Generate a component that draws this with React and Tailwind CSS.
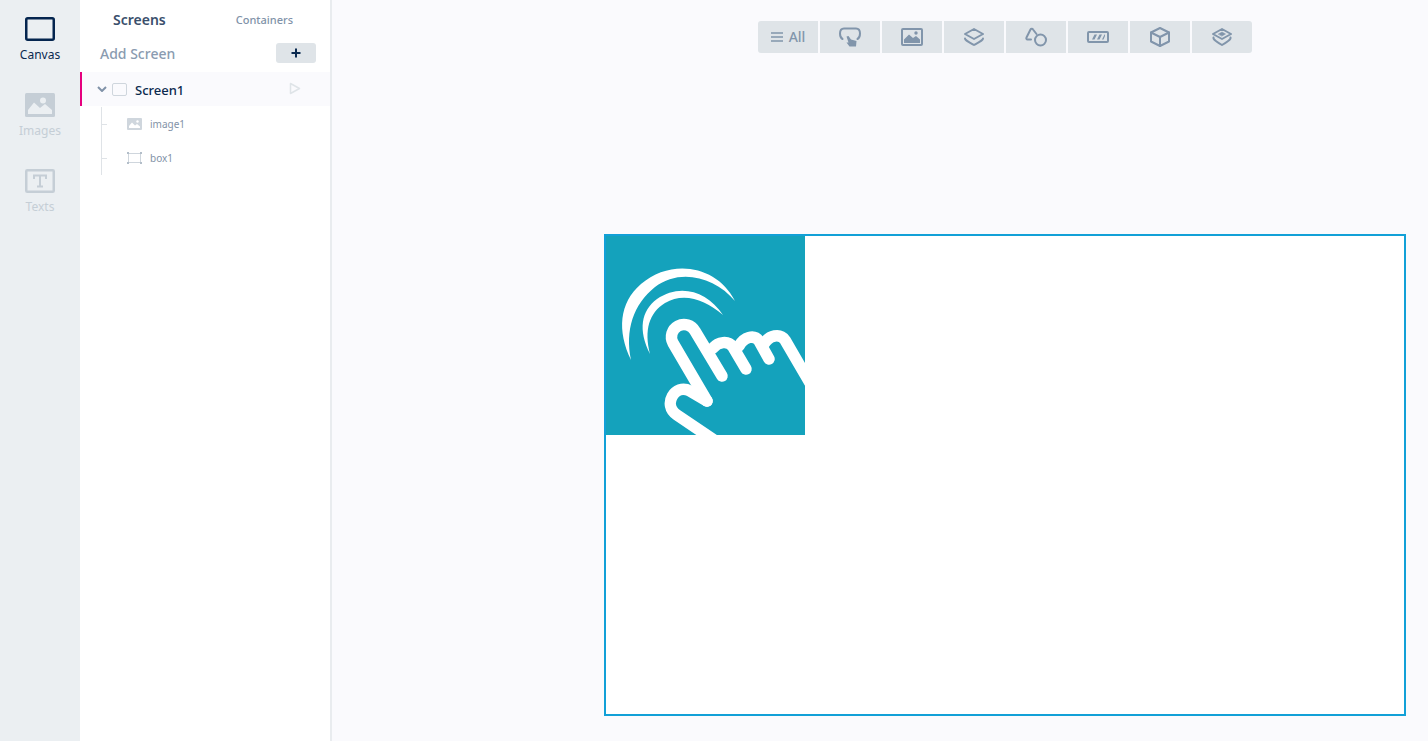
import React from 'react';

const font = { fontFamily: '"Noto Sans", sans-serif' };

const HandLogo = () => (
  <svg viewBox="0 0 200 200" className="w-[200px] h-[200px] block">
    <path
      fill="#fff"
      d="M26 125C12 96 14 68 36 49C66 23 112 30 130 66C110 42 75 33 50 52C28 70 20 95 26 125Z"
    />
    <path
      fill="#fff"
      d="M45 119C33 95 36 76 52 64C75 48 102 56 118 80C100 64 78 57 60 68C44 78 39 95 45 119Z"
    />
    <g fill="none" stroke="#fff" strokeWidth="11.5" strokeLinecap="round" strokeLinejoin="round">
      <path d="M102 166L68 108A12.5 12.5 0 0 1 90 96L117 141" />
      <path d="M108 113C113 107 123 105 128 112L141 134" />
      <path d="M134 111C139 102 149 99 154 106L164 124" />
      <path d="M159 109C164 100 175 98 180 105L212 160" />
      <path d="M102 166L85 156C70 148 57 170 72 180L112 207" />
    </g>
  </svg>
);

const RailItem = ({ label, active, children }) => (
  <div className={`flex flex-col items-center h-[76px] pt-[17px] ${active ? 'text-[#0b2a50]' : 'text-[#c5ced6]'}`}>
    {children}
    <span className="text-xs leading-4 mt-[6px]">{label}</span>
  </div>
);

const ToolButton = ({ className = '', children }) => (
  <div className={`w-[60px] h-8 bg-[#dfe4e8] flex items-center justify-center text-[#8195ab] ${className}`}>
    {children}
  </div>
);

const TreeRow = ({ label, children }) => (
  <div className="flex items-center h-[34px]">
    <div className="w-[5px] h-px bg-[#dfe3e7]" />
    <div className="ml-[20px] flex items-center">{children}</div>
    <span className="ml-2 text-[10px] text-[#8292a7]">{label}</span>
  </div>
);

const iconProps = { fill: 'none', stroke: 'currentColor', strokeWidth: 2, strokeLinecap: 'round', strokeLinejoin: 'round' };

const App = () => {
  return (
    <div className="flex h-[741px] w-[1428px] overflow-hidden bg-[#fafafd]" style={font}>
      {/* Left rail */}
      <div className="w-20 h-full bg-[#ebeff2] shrink-0">
        <RailItem label="Canvas" active>
          <svg width="30" height="24" viewBox="0 0 30 24">
            <rect x="1.25" y="1.25" width="27.5" height="21.5" rx="1.5" fill="none" stroke="#04254f" strokeWidth="2.5" />
          </svg>
        </RailItem>
        <RailItem label="Images">
          <svg width="30" height="24" viewBox="0 0 30 24">
            <rect width="30" height="24" rx="1.5" fill="#c5ced6" />
            <path d="M3 21V17L9 9.5L15 15L20 11L27 17V21Z" fill="#ebeff2" />
            <circle cx="18" cy="7.5" r="3" fill="#ebeff2" />
          </svg>
        </RailItem>
        <RailItem label="Texts">
          <svg width="30" height="24" viewBox="0 0 30 24">
            <rect x="1.25" y="1.25" width="27.5" height="21.5" rx="1" fill="none" stroke="#c5ced6" strokeWidth="2.5" />
            <path d="M9 10V6.5H21V10M15 6.5V17.5M12 17.5H18" fill="none" stroke="#c5ced6" strokeWidth="2" />
          </svg>
        </RailItem>
      </div>

      {/* Screens panel */}
      <div className="w-[252px] h-full bg-white border-r-2 border-[#e9ecef] shrink-0">
        <div className="flex items-center h-10">
          <span className="ml-[33px] text-sm font-semibold text-[#3a4f6c]">Screens</span>
          <span className="ml-[70px] text-[11px] font-medium text-[#8092a8]">Containers</span>
        </div>
        <div className="flex items-center justify-between h-7 pl-5 pr-[14px]">
          <span className="text-sm font-medium text-[#8a9bb0]">Add Screen</span>
          <div className="w-10 h-5 -mt-[2px] rounded-[3px] bg-[#dfe4e8] flex items-center justify-center">
            <svg width="10" height="10" viewBox="0 0 10 10">
              <path d="M5 .5V9.5M.5 5H9.5" stroke="#0b2a50" strokeWidth="2" />
            </svg>
          </div>
        </div>
        <div className="mt-1 h-[34px] flex items-center bg-[#fafafd] border-l-2 border-[#e6007e]">
          <svg width="10" height="6" viewBox="0 0 10 6" className="ml-[15px]">
            <path d="M1 1L5 5L9 1" fill="none" stroke="#8092a8" strokeWidth="2" />
          </svg>
          <div className="ml-[5px] w-[15px] h-[13px] rounded-[2px] border border-[#cfd6dd] bg-[#fafafd]" />
          <span className="ml-2 mt-[3px] text-[13px] font-medium text-[#0c2a4f]">Screen1</span>
          <svg width="12" height="13" viewBox="0 0 12 13" className="ml-[105px] -mt-[2px]">
            <path d="M1.5 1.5L10.5 6.5L1.5 11.5Z" fill="none" stroke="#dfe4e8" strokeWidth="1.5" strokeLinejoin="round" />
          </svg>
        </div>
        <div className="ml-[21px] border-l border-[#dfe3e7] h-[68px] mt-px">
          <TreeRow label="image1">
            <svg width="15" height="12" viewBox="0 0 15 12">
              <rect width="15" height="12" rx="1" fill="#cfd6dd" />
              <path d="M2 10V8L5 4.5L8 7.5L10 6L13 8.5V10Z" fill="#fff" />
              <circle cx="10.5" cy="3.5" r="1.2" fill="#fff" />
            </svg>
          </TreeRow>
          <TreeRow label="box1">
            <svg width="15" height="12" viewBox="0 0 15 12">
              <rect x="1.5" y="1.5" width="12" height="9" fill="none" stroke="#cfd6dd" />
              <g fill="#b3bec9">
                <rect width="2" height="2" />
                <rect x="13" width="2" height="2" />
                <rect y="10" width="2" height="2" />
                <rect x="13" y="10" width="2" height="2" />
              </g>
            </svg>
          </TreeRow>
        </div>
      </div>

      {/* Workspace */}
      <div className="ml-[272px] w-[802px] flex flex-col items-center">
        <div className="mt-[21px] flex gap-[2px]">
          <ToolButton className="rounded-l-[3px]">
            <svg width="12" height="10" viewBox="0 0 12 10">
              <path d="M0 1H12M0 5H12M0 9H12" stroke="currentColor" strokeWidth="1.6" />
            </svg>
            <span className="ml-[6px] text-sm font-medium leading-none">All</span>
          </ToolButton>
          <ToolButton>
            <svg width="24" height="20" viewBox="0 0 24 20">
              <path d="M4.5 12C2.5 11 2 9.5 2 6.5C2 3 3 1.5 6 1.5H18C21 1.5 22 3 22 6.5C22 9.5 21.5 11 19.5 12" fill="none" stroke="currentColor" strokeWidth="2" strokeLinecap="round" />
              <path d="M8.5 9.5L10.5 9L13 12.5L18.5 14L18 19.5H11.5L8.5 15.5L10.5 15.5Z" fill="currentColor" />
            </svg>
          </ToolButton>
          <ToolButton>
            <svg width="22" height="18" viewBox="0 0 22 18">
              <rect x="1" y="1" width="20" height="16" rx="1" fill="none" stroke="currentColor" strokeWidth="2" />
              <path d="M3 15V11.5L8 6.5L12 10L15 8L19 11.5V15Z" fill="currentColor" />
              <circle cx="15" cy="5" r="1.7" fill="currentColor" />
            </svg>
          </ToolButton>
          <ToolButton>
            <svg width="20" height="18" viewBox="0 0 20 18" {...iconProps}>
              <path d="M10 1L19 6L10 11L1 6Z" />
              <path d="M1 10.5C1 12 3 13 10 17C17 13 19 12 19 10.5" />
            </svg>
          </ToolButton>
          <ToolButton>
            <svg width="22" height="20" viewBox="0 0 22 20" {...iconProps}>
              <path d="M6 12.5H2.5C1.5 12.5 1 11.5 1.5 10.5L5.5 2.5C6 1.5 7.5 1.5 8 2.5L11.5 7" />
              <circle cx="15.5" cy="13" r="5.5" />
            </svg>
          </ToolButton>
          <ToolButton>
            <svg width="22" height="12" viewBox="0 0 22 12">
              <rect x="1" y="1" width="20" height="10" rx="1" fill="none" stroke="currentColor" strokeWidth="2" />
              <path d="M5 8.5H7.5L10 3.5H7.5ZM10 8.5H12.5L15 3.5H12.5ZM15 8.5H16.5L18 5V3.5H17.5Z" fill="currentColor" />
            </svg>
          </ToolButton>
          <ToolButton>
            <svg width="20" height="20" viewBox="0 0 20 20" {...iconProps}>
              <path d="M10 1L19 5.5V14.5L10 19L1 14.5V5.5Z" />
              <path d="M1 5.5L10 10L19 5.5M10 10V19" />
            </svg>
          </ToolButton>
          <ToolButton className="rounded-r-[3px]">
            <svg width="20" height="18" viewBox="0 0 20 18" {...iconProps}>
              <path d="M10 1L19 6L10 11L1 6Z" />
              <path d="M6.5 6L10 4L13.5 6L10 8Z" fill="currentColor" strokeWidth="0.5" />
              <path d="M1.5 9.5C1 11 2 12 10 17C18 12 19 11 18.5 9.5" />
            </svg>
          </ToolButton>
        </div>

        {/* Canvas */}
        <div className="mt-[181px] w-[802px] h-[482px] bg-white border-2 border-[#12a0d7] overflow-hidden">
          <div className="ml-[-1px] mt-[-1px] w-[200px] h-[200px] bg-[#14a2bc] overflow-hidden">
            <HandLogo />
          </div>
        </div>
      </div>
    </div>
  );
};

export default App;
